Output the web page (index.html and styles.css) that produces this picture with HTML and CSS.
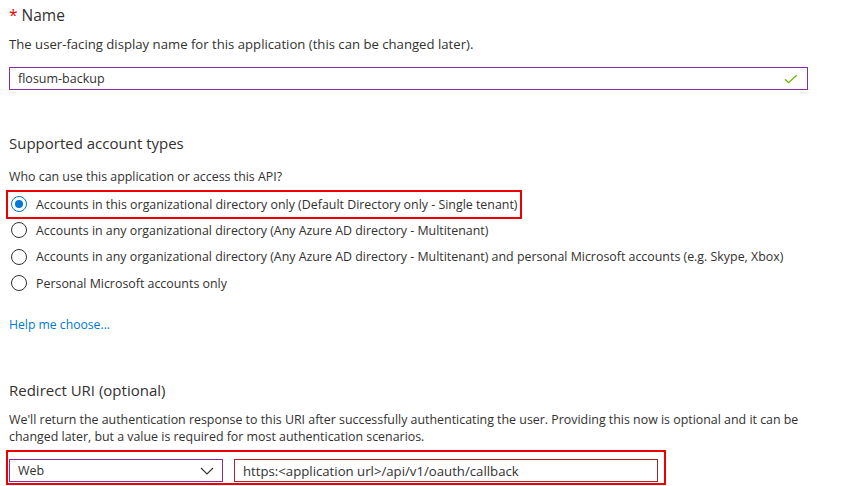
FILE: index.html
```html
<!DOCTYPE html>
<html>
<head>
<meta charset="utf-8">
<link rel="stylesheet" href="styles.css">
</head>
<body>
<div class="page">
  <div class="title t-name"><span class="req">*</span> Name</div>
  <div class="desc d-name">The user-facing display name for this application (this can be changed later).</div>
  <div class="field name-field">
    <span class="val">flosum-backup</span>
    <svg class="check" width="14" height="10" viewBox="0 0 14 10"><path d="M1 5.2 L4.6 8.6 L13 1" fill="none" stroke="#6bb700" stroke-width="1.2"/></svg>
  </div>

  <div class="title t-acct">Supported account types</div>
  <div class="desc d-acct">Who can use this application or access this API?</div>
  <div class="radios">
    <div class="radio-row"><span class="mark-box"><span class="radio on"></span><span class="lbl">Accounts in this organizational directory only (Default Directory only - Single tenant)</span></span></div>
    <div class="radio-row"><span class="radio"></span><span class="lbl">Accounts in any organizational directory (Any Azure AD directory - Multitenant)</span></div>
    <div class="radio-row"><span class="radio"></span><span class="lbl">Accounts in any organizational directory (Any Azure AD directory - Multitenant) and personal Microsoft accounts (e.g. Skype, Xbox)</span></div>
    <div class="radio-row"><span class="radio"></span><span class="lbl">Personal Microsoft accounts only</span></div>
  </div>
  <div class="link">Help me choose...</div>

  <div class="title t-redir">Redirect URI (optional)</div>
  <div class="desc d-redir">We'll return the authentication response to this URI after successfully authenticating the user. Providing this now is optional and it can be changed later, but a value is required for most authentication scenarios.</div>
  <div class="uri-box">
    <div class="field select-field">
      <span class="val">Web</span>
      <svg class="chev" width="14" height="8" viewBox="0 0 14 8"><path d="M1 1 L7 7 L13 1" fill="none" stroke="#323130" stroke-width="1.1"/></svg>
    </div>
    <div class="field uri-field"><span class="val">https:&lt;application url&gt;/api/v1/oauth/callback</span></div>
  </div>
</div>
</body>
</html>
```
FILE: styles.css
```css
html, body {
  margin: 0;
  padding: 0;
  background: #ffffff;
}
body {
  font-family: "Open Sans", "Noto Sans", sans-serif;
  color: #323130;
}
.page {
  padding-left: 9px;
  width: 830px;
}
.title {
  font-size: 15px;
  line-height: 20px;
  color: #323130;
}
.t-name { font-size: 15.5px; }
.req {
  color: #e50000;
}
.desc {
  font-size: 12.4px;
  line-height: 17px;
  width: 800px;
}
.t-name { margin-top: 5px; }
.d-name { margin-top: 11px; font-size: 13.15px; }
.field {
  box-sizing: border-box;
  height: 23px;
  display: flex;
  align-items: center;
  padding: 0 8px;
  font-size: 12.5px;
  background: #fff;
}
.name-field {
  margin-top: 14px;
  width: 799px;
  border: 1px solid #8a2da5;
  justify-content: space-between;
}
.check { margin-right: 1px; }
.t-acct { margin-top: 43px; }
.d-acct { margin-top: 15px; }
.radios {
  margin-top: 6px;
}
.radio-row {
  height: 26.3px;
  display: flex;
  align-items: center;
  font-size: 12.4px;
}
.radio-row .radio { margin-left: 2px; }
.mark-box {
  display: inline-flex;
  align-items: center;
  height: 25px;
  outline: 2px solid #ee0000;
  margin-left: -1px;
  padding-left: 3px;
  padding-right: 3px;
}
.mark-box .radio { margin-left: 0; }
.radio {
  box-sizing: border-box;
  width: 16px;
  height: 16px;
  border: 1px solid #323130;
  border-radius: 50%;
  position: relative;
  flex: none;
}
.radio.on {
  border-color: #0078d4;
}
.radio.on::after {
  content: "";
  position: absolute;
  left: 3px;
  top: 3px;
  width: 8px;
  height: 8px;
  border-radius: 50%;
  background: #0078d4;
}
.lbl {
  margin-left: 9px;
  white-space: nowrap;
}
.link {
  margin-top: 20px;
  font-size: 12.2px;
  line-height: 17px;
  color: #0078d4;
}
.t-redir { margin-top: 47px; }
.d-redir { margin-top: 11px; width: 815px; }
.uri-box {
  display: inline-flex;
  margin-top: 5px;
  margin-left: -3px;
  border: 2px solid #ee0000;
  padding: 7px 6px 1px 1px;
  gap: 11px;
}
.select-field {
  width: 214px;
  border: 1px solid #8a2da5;
  justify-content: space-between;
}
.uri-field {
  width: 424px;
  border: 1px solid #a4262c;
  font-size: 13.2px;
}
```
